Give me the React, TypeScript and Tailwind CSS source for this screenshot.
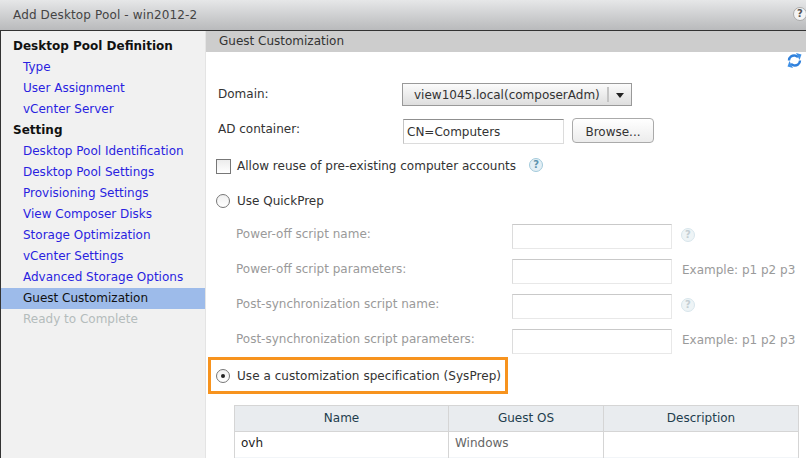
function Help({ faded = false }: { faded?: boolean }) {
  return (
    <span className={`flex h-[14px] w-[14px] items-center justify-center rounded-full border text-[10px] font-bold leading-none ${faded ? "border-[#d8e6ec] bg-[#eef4f6] text-[#c4ced3]" : "border-[#a3cadb] bg-[#e3eff5] text-[#5d93ad]"}`}>?</span>
  );
}
function Radio({ checked = false }: { checked?: boolean }) {
  return (
    <span className="flex h-[14px] w-[14px] shrink-0 items-center justify-center rounded-full border border-[#777] bg-gradient-to-b from-[#f0f0f0] to-white">
      {checked && <span className="h-[4px] w-[4px] rounded-full bg-[#222]" />}
    </span>
  );
}
function SideLink({ t }: { t: string }) {
  return <div className="h-[21px] pl-[22px] leading-[21px] text-[#2a1fe0]">{t}</div>;
}
function SideHead({ t }: { t: string }) {
  return <div className="h-[21px] pl-[12px] font-bold leading-[21px] text-[#111]">{t}</div>;
}
function ScriptRow({ label, example, help }: { label: string; example?: boolean; help?: boolean }) {
  return (
    <div className="flex h-[25px] items-center">
      <div className="mb-[6px] w-[276px] text-[#9a9a9a]">{label}</div>
      <div className="h-[25px] w-[160px] border border-[#e8e8e8] border-t-[#c9c9c9] border-l-[#dcdcdc] bg-white" />
      {help && <div className="mb-[3px] ml-[9px]"><Help faded /></div>}
      {example && <div className="mb-[3px] ml-[10px] text-[#9a9a9a]">Example: p1 p2 p3</div>}
    </div>
  );
}
export default function App() {
  return (
    <div className="flex h-[458px] w-[806px] flex-col overflow-hidden bg-white text-[12px] [font-family:'DejaVu_Sans',sans-serif]">
      <div className="flex h-[31px] shrink-0 items-center justify-between border-b border-[#333] bg-gradient-to-b from-[#e6e7e8] to-[#b9babc] pl-[13px]">
        <span className="tracking-[0.14px] text-[#444]">Add Desktop Pool - win2012-2</span>
        <span className="mr-[-1px] mb-[3px] flex h-[14px] w-[14px] items-center justify-center rounded-full border border-[#aaa] bg-[#f4f4f4] text-[10px] font-bold leading-none text-[#555]">?</span>
      </div>
      <div className="flex min-h-0 flex-1 border-l border-[#333]">
        <div className="w-[204px] shrink-0 bg-[#f1f1f1] pt-[5px]">
          <SideHead t="Desktop Pool Definition" />
          <SideLink t="Type" />
          <SideLink t="User Assignment" />
          <SideLink t="vCenter Server" />
          <SideHead t="Setting" />
          <SideLink t="Desktop Pool Identification" />
          <SideLink t="Desktop Pool Settings" />
          <SideLink t="Provisioning Settings" />
          <SideLink t="View Composer Disks" />
          <SideLink t="Storage Optimization" />
          <SideLink t="vCenter Settings" />
          <SideLink t="Advanced Storage Options" />
          <div className="h-[21px] bg-[#9dbbea] pl-[22px] leading-[21px] text-[#111]">Guest Customization</div>
          <div className="h-[21px] pl-[22px] leading-[21px] text-[#b4bcbc]">Ready to Complete</div>
        </div>
        <div className="min-w-0 flex-1 border-l border-[#e4e4e4] text-[#333]">
          <div className="h-[21px] bg-[#cdcdcd] pl-[13px] leading-[20px] text-[#333]">Guest Customization</div>
          <div className="flex h-[31px] justify-end pr-[4px] pt-[1px]">
            <svg width="15" height="15" viewBox="0 0 15 15" fill="none">
              <path d="M2 7.5C2 4 5 2 8.5 2.6L11 4" stroke="#2f80dc" strokeWidth="2.4" />
              <path d="M9 0l5.5 1.5L12.5 7z" fill="#3f90e6" />
              <path d="M13 7.5C13 11 10 13 6.5 12.4L4 11" stroke="#2f80dc" strokeWidth="2.4" />
              <path d="M6 15L.5 13.5 2.5 8z" fill="#3f90e6" />
            </svg>
          </div>
          <div className="pl-[12px]">
            <div className="flex h-[23px] items-center">
              <div className="mb-[1px] w-[184px]">Domain:</div>
              <div className="flex h-[23px] w-[230px] items-center border border-[#999] bg-gradient-to-b from-[#fbfbfb] to-[#dedede] text-[#333]">
                <span className="flex-1 pl-[11px]">view1045.local(composerAdm)</span>
                <span className="h-[15px] border-l-2 border-[#c4c4c4]" />
                <svg width="22" height="8" viewBox="0 0 22 8"><path d="M7 2h8l-4 5z" fill="#222" /></svg>
              </div>
            </div>
            <div className="mt-[12px] flex h-[25px] items-center">
              <div className="mb-[4px] w-[185px]">AD container:</div>
              <div className="mt-[1px] h-[25px] w-[161px] border border-[#dcdcdc] border-t-[#8f8f8f] border-l-[#c4c4c4] bg-white pl-[3px] leading-[25px]">CN=Computers</div>
              <div className="ml-[8px] flex h-[25px] w-[82px] items-center justify-center rounded-[4px] border border-[#aaa] bg-gradient-to-b from-white to-[#ececec] pt-[2px]">Browse...</div>
            </div>
            <div className="mt-[11px] flex h-[24px] items-center">
              <span className="ml-[-2px] h-[15px] w-[15px] shrink-0 border border-[#777] bg-gradient-to-b from-[#ececec] to-white" />
              <span className="ml-[6px]">Allow reuse of pre-existing computer accounts</span>
              <span className="ml-[13px] mb-[2px]"><Help /></span>
            </div>
            <div className="mt-[11px] flex h-[24px] items-center">
              <span className="ml-[-2px]"><Radio /></span>
              <span className="ml-[7px]">Use QuickPrep</span>
            </div>
            <div className="mt-[11px] flex flex-col gap-[10px] pl-[18px]">
              <ScriptRow label="Power-off script name:" help />
              <ScriptRow label="Power-off script parameters:" example />
              <ScriptRow label="Post-synchronization script name:" help />
              <ScriptRow label="Post-synchronization script parameters:" example />
            </div>
            <div className="mt-[3px] ml-[-10px] flex h-[37px] w-[300px] items-center border-[3px] border-[#f7931e] pl-[5px] tracking-[0.05px]">
              <Radio checked />
              <span className="ml-[7px]">Use a customization specification (SysPrep)</span>
            </div>
            <div className="mt-[11px] ml-[16px] w-[565px] border-x border-t border-[#d5d5d5]">
              <div className="flex h-[26px] border-b border-[#d5d5d5] bg-[#e9ecef] text-center leading-[25px] text-[#1f3d4d]">
                <div className="w-[214px] border-r border-[#d5d5d5]">Name</div>
                <div className="w-[155px] border-r border-[#d5d5d5]">Guest OS</div>
                <div className="flex-1">Description</div>
              </div>
              <div className="flex h-[25px] leading-[23px]">
                <div className="w-[214px] border-r border-[#d5d5d5] pl-[6px] text-[#222]">ovh</div>
                <div className="w-[155px] border-r border-[#d5d5d5] pl-[6px] text-[#666]">Windows</div>
                <div className="flex-1" />
              </div>
              <div className="flex h-[10px] bg-[#f2f5f8]">
                <div className="w-[214px] border-r border-[#d5d5d5]" />
                <div className="w-[155px] border-r border-[#d5d5d5]" />
              </div>
            </div>
          </div>
        </div>
      </div>
    </div>
  );
}
